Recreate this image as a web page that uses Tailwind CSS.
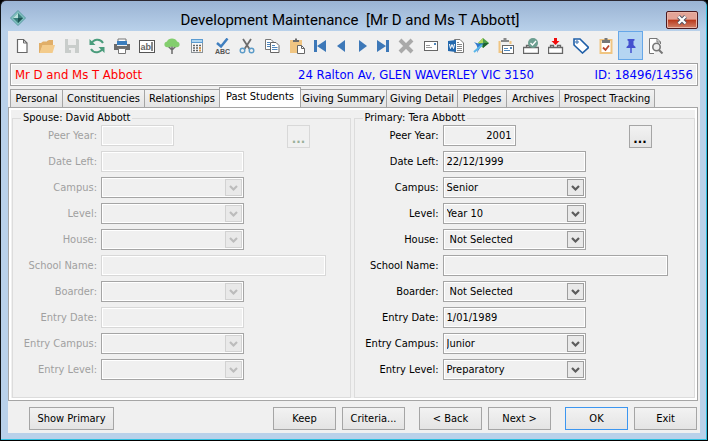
<!DOCTYPE html>
<html lang="en">
<head>
<meta charset="utf-8">
<meta name="viewport" content="width=device-width, initial-scale=1">
<title>Development Maintenance</title>
<script src="https://cdn.jsdelivr.net/npm/@tailwindcss/browser@4"></script>
</head>
<body class="bg-black font-['DejaVu_Sans_Condensed','DejaVu_Sans',sans-serif] text-[11px] leading-[14px] text-black">
<svg class="hidden">
  <symbol id="chev" viewBox="0 0 17 17"><rect x=".5" y=".5" width="16" height="16" fill="#e9e9e9" stroke="currentColor" stroke-opacity=".55"/><path d="M5 7L8.500 10.500L12 7" fill="none" stroke="currentColor" stroke-width="2.200"/></symbol>
</svg>
<div class="flex min-h-screen flex-col rounded-t-md border border-x-[#101418] border-t-[#2b2730] border-b-black bg-linear-to-b from-[#9ab3d3] to-[#b9d1ea] to-[30px] shadow-[inset_-1px_-1px_0_#2fc0e0] px-[7px] pb-[7px]">
  <header class="flex h-[30px] items-center">
    <svg class="mt-1 ml-[2px] size-4 shrink-0" viewBox="0 0 16 16"><path d="M8 .5L15.500 8L8 15.500L.5 8Z" fill="#7fc0bd" stroke="#5c9ba5"/><path d="M8 3L13 8L8 13L3 8Z" fill="#397f7c"/><path d="M8 3L8 8L3 8Z" fill="#b9e0dc"/><path d="M8 8L13 8L8 13Z" fill="#1d5554"/></svg>
    <h1 class="flex-1 pt-2 pl-2 text-center font-['Roboto','Open_Sans',sans-serif] text-[15px] leading-[22px] whitespace-pre">Development Maintenance  [Mr D and Ms T Abbott]</h1>
    <button aria-label="Close" class="mt-[7px] mr-[2px] flex h-[18px] w-8 items-center justify-center rounded-[2px] border border-[#4c1a20] bg-linear-to-b from-[#e3a497] from-45% via-[#b83618] via-50% to-[#d08068] shadow-[inset_0_0_0_1px_#e9b5a8]">
      <svg class="h-[10px] w-3" viewBox="0 0 12 10"><path d="M2.500 1.500L9.500 8.500M9.500 1.500L2.500 8.500" stroke="#535666" stroke-width="4"/><path d="M2.500 1.500L9.500 8.500M9.500 1.500L2.500 8.500" stroke="#fff" stroke-width="2.200"/></svg>
    </button>
  </header>

  <main class="flex flex-1 flex-col bg-[#f0f0f0]">
    <div role="toolbar" aria-label="Record tools" class="flex h-8 items-start pl-px [&_button]:flex [&_button]:h-[29px] [&_button]:w-[25px] [&_button]:shrink-0 [&_button]:items-center [&_button]:justify-center [&_svg]:size-4">
      <button aria-label="New"><svg viewBox="0 0 16 16"><path d="M3.500 1.500H9.500L13 5V14.500H3.500Z" fill="#fff" stroke="#686868" stroke-width="1.200"/><path d="M9.500 1.500V5H13" fill="none" stroke="#686868"/></svg></button>
      <button aria-label="Open"><svg viewBox="0 0 16 16"><path d="M0 15V5H2L4 3.500H8V3L10 2H14V7H4L1 15Z" fill="#e0ae68"/><path d="M3.500 7H16L13.500 15H.5Z" fill="#f3cb8b"/></svg></button>
      <button aria-label="Save" disabled><svg viewBox="0 0 16 16"><path d="M1 1H14L15 2V15H1Z" fill="#c9cdcb"/><path d="M4 1H12V7H4ZM5 10H11V15H5Z" fill="#ececec"/><path d="M5 12H7V15H5Z" fill="#c9cdcb"/></svg></button>
      <button aria-label="Refresh"><svg viewBox="0 0 16 16"><path d="M2 6.500C4 1 11 0 14 5M14 9.500C12 15 5 16 2 11" fill="none" stroke="#4a9c7c" stroke-width="2"/><path d="M.5 1V7H6.500ZM15.500 15V9H9.500Z" fill="#4a9c7c"/></svg></button>
      <button aria-label="Print"><svg viewBox="0 0 16 16"><path d="M4 1H12V4H4Z" fill="#fff" stroke="#777"/><path d="M3 3H13V7H3Z" fill="#3b7dbd"/><path d="M0 6H3V8H13V6H16V12H0Z" fill="#6c6c6c"/><path d="M4.500 10.500H11.500V15.500H4.500Z" fill="#fff" stroke="#777"/></svg></button>
      <button aria-label="Edit text"><svg viewBox="0 0 16 16"><rect x=".5" y="2.500" width="15" height="12" fill="#fff" stroke="#555"/><text x="1.500" y="11.500" font-size="9" font-weight="bold" fill="#666" font-family="Liberation Sans">ab</text><path d="M13 4V13" stroke="#111"/></svg></button>
      <button aria-label="Family tree"><svg viewBox="0 0 16 16"><path d="M8 8V16M8 12L4.500 8.500M8 12L11.500 8.500" stroke="#6b6b6b" stroke-width="1.500" fill="none"/><path d="M2 9C-.5 8 0 4 3 3.500C4-.5 12-.5 13 3.500C16 4 16.500 8 14 9C11 10 10 8.500 8 8.500C6 8.500 5 10 2 9Z" fill="#83ce6e"/></svg></button>
      <button aria-label="Calculator"><svg viewBox="0 0 16 16"><rect x="2" y="1" width="12" height="14" fill="#8c9296"/><path d="M2 1H14V5H2Z" fill="#5b9bd0"/><path d="M3 2H13V4H3Z" fill="#aed5f1"/><path d="M3 5H13V14H3Z" fill="#fafafa"/><path d="M4 7.500H12M4 10H12M4 12.500H12" stroke="#606468" stroke-width="1.500" stroke-dasharray="2 1"/><path d="M10 10H12M10 12.500H12" stroke="#e69b3c" stroke-width="1.500"/></svg></button>
      <button aria-label="Spelling"><svg viewBox="0 0 16 16"><path d="M3 5L7 8.500L13.500 .5" fill="none" stroke="#407fbf" stroke-width="2.500"/><text x="1" y="16" font-size="7" font-weight="bold" fill="#555" font-family="Liberation Sans">ABC</text></svg></button>
      <button aria-label="Cut"><svg viewBox="0 0 16 16"><path d="M4 1L10.500 11M12 1L5.500 11" stroke="#6d6d6d" stroke-width="1.800"/><circle cx="3.500" cy="12.500" r="2.300" fill="none" stroke="#5b9bc8" stroke-width="1.400"/><circle cx="12.500" cy="12.500" r="2.300" fill="none" stroke="#5b9bc8" stroke-width="1.400"/></svg></button>
      <button aria-label="Copy"><svg viewBox="0 0 16 16"><path d="M1.500 1.500H7L9.500 4V11.500H1.500Z" fill="#fff" stroke="#777"/><path d="M3 4.500H6M3 6.500H6M3 8.500H6" stroke="#4f87bd"/><path d="M6.500 4.500H12L15 7.500V14.500H6.500Z" fill="#fff" stroke="#666"/><path d="M8 7.500H11M8 9.500H13.500M8 11.500H13.500" stroke="#4f87bd"/></svg></button>
      <button aria-label="Paste"><svg viewBox="0 0 16 16"><path d="M1 2H13V15H1Z" fill="#f0c582"/><path d="M4 4V2H6V.5H8V2H10V4Z" fill="#6b6b6b"/><path d="M8.500 7.500H12.500L15.500 10.500V15.500H8.500Z" fill="#fff" stroke="#666"/><path d="M12.500 7.500V10.500H15.500" fill="none" stroke="#666"/></svg></button>
      <button aria-label="First record" class="w-[21px]!"><svg viewBox="0 0 16 16"><path d="M2 2H5V14H2ZM14 2V14L5 8Z" fill="#3d78b8"/></svg></button>
      <button aria-label="Previous record" class="w-[21px]!"><svg viewBox="0 0 16 16"><path d="M12 2V14L4 8Z" fill="#3d78b8"/></svg></button>
      <button aria-label="Next record" class="w-[21px]!"><svg viewBox="0 0 16 16"><path d="M5 2V14L13 8Z" fill="#3d78b8"/></svg></button>
      <button aria-label="Last record" class="w-[21px]!"><svg viewBox="0 0 16 16"><path d="M14 2H11V14H14ZM2 2V14L11 8Z" fill="#3d78b8"/></svg></button>
      <button aria-label="Delete" disabled><svg viewBox="0 0 16 16"><path d="M2 2L14 14M14 2L2 14" stroke="#a9a9a9" stroke-width="4"/></svg></button>
      <button aria-label="Mail"><svg viewBox="0 0 16 16"><rect x="1.500" y="3.500" width="13" height="9" fill="#fff" stroke="#666"/><path d="M3 7.500H7M3 9.500H9" stroke="#999"/><path d="M11 5H13V7H11Z" fill="#4f87bd"/></svg></button>
      <button aria-label="Word document"><svg viewBox="0 0 16 16"><path d="M6.500 1.500H12L15.500 5V14.500H6.500Z" fill="#fff" stroke="#777"/><path d="M9 4.500H11M9 6.500H14M9 8.500H14M9 10.500H14M9 12.500H14" stroke="#888"/><path d="M0 3L8 2V14L0 13Z" fill="#2469ae"/><path d="M1.500 6L2.500 10.500L4 6.500L5.500 10.500L6.500 6" fill="none" stroke="#fff"/></svg></button>
      <button aria-label="Export"><svg viewBox="0 0 16 16"><path d="M5 5L10 0L16 5L10 10Z" fill="#4f9f49"/><path d="M10 0L10 5L5 5Z" fill="#b4d85e"/><path d="M10 5H16L10 10Z" fill="#1d6430"/><path d="M1 4C5 6 8 6 11 5C8 8 6 11 4 15C5 11 5 8 1 4Z" fill="#2f79cc"/><path d="M1 14L9 7" stroke="#58b6e9" stroke-width="2"/></svg></button>
      <button aria-label="Paste letter"><svg viewBox="0 0 16 16"><path d="M1.500 3V14H5M12.500 3V6" fill="none" stroke="#f0c582" stroke-width="2"/><path d="M3 4V2H5.500V0H8.500V2H11V4Z" fill="#888"/><rect x="4.500" y="7.500" width="11" height="8" fill="#fff" stroke="#666"/><path d="M6 10.500H10M6 12.500H12" stroke="#4f87bd"/><path d="M12 9H14V11H12Z" fill="#4f87bd"/></svg></button>
      <button aria-label="Approve"><svg viewBox="0 0 16 16"><path d="M3.500 9V7.500H6.500V9M9.500 9V7.500H12.500V9M.5 9.500H15.500V15.500H.5Z" fill="#fff" stroke="#666" stroke-width="1.300"/><circle cx="10" cy="5" r="5" fill="#6d9f91"/><path d="M7.500 5L9.500 7L13 3" fill="none" stroke="#fff" stroke-width="1.300"/></svg></button>
      <button aria-label="Import"><svg viewBox="0 0 16 16"><path d="M2.500 9V7.500H5.500V9M9.500 9V7.500H12.500V9M.5 9.500H14.500V15.500H.5Z" fill="#fff" stroke="#666" stroke-width="1.300"/><path d="M6 0H9V3H11.500L7.500 7L3.500 3H6Z" fill="#f00c0c"/></svg></button>
      <button aria-label="Tag"><svg viewBox="0 0 16 16"><path d="M1 1H7L15.500 9.500L9.500 15L1 7Z" fill="#fff" stroke="#1f5fa8" stroke-width="1.600"/><circle cx="4" cy="4" r="1.200" fill="none" stroke="#1f5fa8"/></svg></button>
      <button aria-label="Tasks"><svg viewBox="0 0 16 16"><rect x="2.500" y="2" width="11" height="13" fill="#fff" stroke="#f0c582" stroke-width="2"/><path d="M4 5V2H6.500V0H9.500V2H12V5Z" fill="#777"/><path d="M5 9.500L7.500 12L11 7.500" fill="none" stroke="#b8452d" stroke-width="1.800"/></svg></button>
      <button aria-label="Pin" aria-pressed="true" class="border border-[#66a7e8] bg-[#b5d5f2]"><svg viewBox="0 0 16 16"><path d="M4.500 1H11.500V2.500L10.500 3V7L12.500 9V10H3.500V9L5.500 7V3L4.500 2.500Z" fill="#4451cf"/><path d="M8 10V15" stroke="#4451cf" stroke-width="1.500"/></svg></button>
      <button aria-label="Preview"><svg viewBox="0 0 16 16"><path d="M6 15.500H1.500V.5H9L12.500 4V6" fill="#fff" stroke="#777"/><path d="M9 .5V4H12.500" fill="none" stroke="#777"/><circle cx="8.500" cy="9" r="3.700" fill="#eee" stroke="#777" stroke-width="1.600"/><path d="M11 12L14.500 15.500" stroke="#777" stroke-width="2"/></svg></button>
    </div>

    <section class="mx-[2px] grid h-[23px] grid-cols-3 items-center border border-[#a0a0a0] px-1 text-[13px] leading-4 whitespace-nowrap shadow-[inset_0_0_0_1px_#fff]">
      <span class="text-[#f00]">Mr D and Ms T Abbott</span>
      <span class="justify-self-center pl-[124px] text-[#00f]">24 Ralton Av, GLEN WAVERLEY VIC 3150</span>
      <span class="justify-self-end text-[#00f]">ID: 18496/14356</span>
    </section>

    <div role="tablist" class="flex h-[21px] items-end pl-[2px] [&_button]:h-[18px] [&_button]:shrink-0 [&_button]:border [&_button]:border-b-0 [&_button]:border-[#a5a5a5] [&_button]:bg-linear-to-b [&_button]:from-[#f2f2f2] [&_button]:to-[#e4e4e4] [&_button]:whitespace-nowrap">
      <button role="tab" class="w-[53px]">Personal</button>
      <button role="tab" class="w-[82px] border-l-0!">Constituencies</button>
      <button role="tab" class="w-[74px] border-x-0!">Relationships</button>
      <button role="tab" aria-selected="true" class="h-5! w-[82px] from-white! to-white! pb-[2px]">Past Students</button>
      <button role="tab" class="w-[86px] border-l-0!">Giving Summary</button>
      <button role="tab" class="w-[71px] border-l-0!">Giving Detail</button>
      <button role="tab" class="w-[49px] border-l-0!">Pledges</button>
      <button role="tab" class="w-[53px] border-l-0!">Archives</button>
      <button role="tab" class="w-[95px] border-l-0!">Prospect Tracking</button>
    </div>

    <div role="tabpanel" class="mr-[2px] border border-[#a5a5a5] bg-white p-[2px]">
      <form class="grid grid-cols-[339fr_342fr] gap-[3px] bg-[#f0f0f0] pt-px pl-px
        [&_fieldset]:border [&_fieldset]:border-[#dcdcdc] [&_fieldset]:pb-[17px]
        [&_legend]:ml-2 [&_legend]:px-[2px]
        [&_label]:pt-1 [&_label]:text-right [&_label]:whitespace-nowrap
        [&_input]:h-[21px] [&_input]:w-[143px] [&_input]:border [&_input]:border-[#a5a5a5] [&_input]:bg-[#f0f0f0] [&_input]:px-[3px] [&_input]:shadow-[inset_0_0_0_1px_#fff] [&_input:disabled]:border-[#d8d8d8]
        [&_select]:h-[21px] [&_select]:w-full [&_select]:appearance-none [&_select]:border [&_select]:border-[#a5a5a5] [&_select]:bg-[#f0f0f0] [&_select]:pl-[3px] [&_select]:shadow-[inset_0_0_0_1px_#fff] [&_select]:opacity-100
        [&_svg]:pointer-events-none [&_svg]:absolute [&_svg]:top-[2px] [&_svg]:right-[2px] [&_svg]:size-[17px] [&_svg]:text-[#5c5c5c]">
        <fieldset class="[&_label]:text-[#a0a0a0] [&_svg]:text-[#bcbcbc]!">
          <legend>Spouse: David Abbott</legend>
          <div class="grid grid-cols-[84px_1fr] gap-x-1 gap-y-[5px]">
            <label for="s1">Peer Year:</label><div class="flex h-[21px] items-start"><input id="s1" disabled class="w-[73px]!"><button type="button" disabled aria-label="Choose spouse year" class="ml-[113px] h-[23px] w-[23px] border border-[#d8d8d8] pt-1 text-[13px] font-bold text-[#9ab09a]">...</button></div>
            <label for="s2">Date Left:</label><input id="s2" disabled>
            <label for="s3">Campus:</label><div class="relative w-[143px]"><select id="s3" disabled></select><svg><use href="#chev"/></svg></div>
            <label for="s4">Level:</label><div class="relative w-[143px]"><select id="s4" disabled></select><svg><use href="#chev"/></svg></div>
            <label for="s5">House:</label><div class="relative w-[143px]"><select id="s5" disabled></select><svg><use href="#chev"/></svg></div>
            <label for="s6">School Name:</label><input id="s6" disabled class="w-[225px]!">
            <label for="s7">Boarder:</label><div class="relative w-[143px]"><select id="s7" disabled></select><svg><use href="#chev"/></svg></div>
            <label for="s8">Entry Date:</label><input id="s8" disabled>
            <label for="s9">Entry Campus:</label><div class="relative w-[143px]"><select id="s9" disabled></select><svg><use href="#chev"/></svg></div>
            <label for="s10">Entry Level:</label><div class="relative w-[143px]"><select id="s10" disabled></select><svg><use href="#chev"/></svg></div>
          </div>
        </fieldset>
        <fieldset>
          <legend>Primary: Tera Abbott</legend>
          <div class="grid grid-cols-[84px_1fr] gap-x-1 gap-y-[5px]">
            <label for="p1">Peer Year:</label><div class="flex h-[21px] items-start"><input id="p1" value="2001" class="w-[73px]! text-right"><button type="button" aria-label="Choose primary year" class="ml-[113px] h-[23px] w-[23px] border border-[#a5a5a5] bg-linear-to-b from-[#f2f2f2] to-[#e4e4e4] pt-1 text-[13px] font-bold">...</button></div>
            <label for="p2">Date Left:</label><input id="p2" value="22/12/1999">
            <label for="p3">Campus:</label><div class="relative w-[143px]"><select id="p3"><option>Senior</option></select><svg><use href="#chev"/></svg></div>
            <label for="p4">Level:</label><div class="relative w-[143px]"><select id="p4"><option>Year 10</option></select><svg><use href="#chev"/></svg></div>
            <label for="p5">House:</label><div class="relative w-[143px]"><select id="p5" class="pl-[6px]!"><option>Not Selected</option></select><svg><use href="#chev"/></svg></div>
            <label for="p6">School Name:</label><input id="p6" class="w-[225px]!">
            <label for="p7">Boarder:</label><div class="relative w-[143px]"><select id="p7" class="pl-[6px]!"><option>Not Selected</option></select><svg><use href="#chev"/></svg></div>
            <label for="p8">Entry Date:</label><input id="p8" value="1/01/1989">
            <label for="p9">Entry Campus:</label><div class="relative w-[143px]"><select id="p9"><option>Junior</option></select><svg><use href="#chev"/></svg></div>
            <label for="p10">Entry Level:</label><div class="relative w-[143px]"><select id="p10"><option>Preparatory</option></select><svg><use href="#chev"/></svg></div>
          </div>
        </fieldset>
      </form>
    </div>

    <footer class="flex pt-[6px] pr-[3px] pl-[21px] [&_button]:h-[23px] [&_button]:w-[63px] [&_button]:border [&_button]:border-[#a5a5a5] [&_button]:bg-linear-to-b [&_button]:from-[#f2f2f2] [&_button]:to-[#e4e4e4]">
      <button class="w-[85px]!">Show Primary</button>
      <button class="ml-auto">Keep</button>
      <button class="ml-[6px]">Criteria...</button>
      <button class="ml-[14px]">&lt; Back</button>
      <button class="ml-[6px]">Next &gt;</button>
      <button class="ml-[14px] border-[#3c96f0]!">OK</button>
      <button class="ml-[6px]">Exit</button>
    </footer>
  </main>
</div>
</body>
</html>
